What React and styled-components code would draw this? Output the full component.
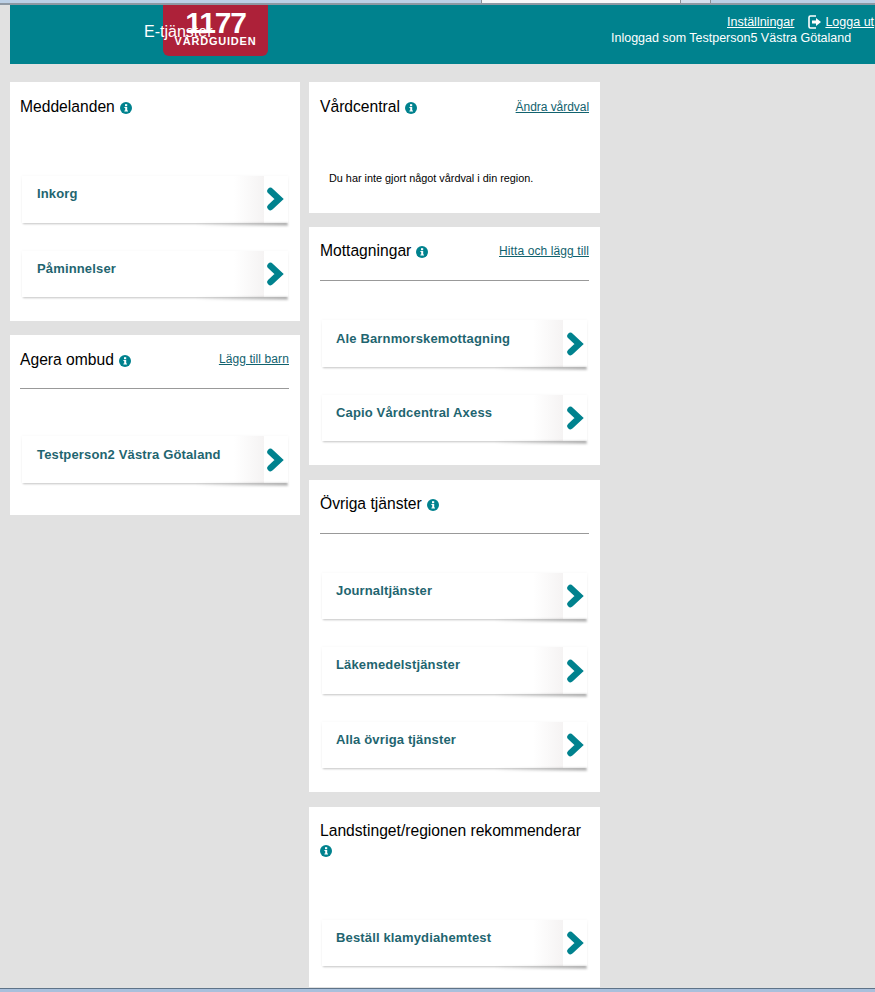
import React from 'react';
import styled, { createGlobalStyle } from 'styled-components';

const GlobalStyle = createGlobalStyle`
  html, body {
    margin: 0;
    padding: 0;
    background: #e1e1e1;
    font-family: "Liberation Sans", Arial, sans-serif;
  }
`;

const Page = styled.div`
  position: relative;
  width: 875px;
  height: 992px;
  overflow: hidden;
  background: #e1e1e1;
`;

const BrowserTop = styled.div`
  height: 3px;
  background: #bcd0e6;
  border-bottom: 2px solid #8d98a3;
`;

const BrowserTab = styled.div`
  position: absolute;
  top: 0;
  left: ${(p) => p.$left}px;
  width: ${(p) => p.$width}px;
  height: 3px;
  background: ${(p) => p.$color};
  border-left: 1px solid #8a8f96;
  border-right: 1px solid #8a8f96;
`;

const BrowserBottom = styled.div`
  position: absolute;
  left: 0;
  right: 0;
  bottom: 0;
  height: 3px;
  background: #a9c0dc;
  border-top: 1px solid #5e7388;
`;

const Header = styled.header`
  position: relative;
  display: flex;
  justify-content: flex-end;
  height: 59px;
  margin-left: 10px;
  background: #00828e;
  color: #fff;
`;

const Logo = styled.div`
  position: absolute;
  top: 0;
  left: 153px;
  width: 105px;
  height: 51px;
  display: flex;
  flex-direction: column;
  align-items: center;
  background: #ad2139;
  border-radius: 0 0 6px 6px;
`;

const LogoNumber = styled.span`
  margin-top: 5px;
  font-size: 30px;
  line-height: 25px;
  font-weight: 700;
  letter-spacing: -1.2px;
`;

const LogoName = styled.span`
  font-size: 11px;
  line-height: 13px;
  font-weight: 700;
  letter-spacing: 0.8px;
`;

const ServiceTitle = styled.span`
  position: absolute;
  top: 18px;
  left: 134px;
  font-size: 16px;
  line-height: 18px;
`;

const UserPanel = styled.div`
  display: flex;
  flex-direction: column;
  align-items: flex-start;
  width: 264px;
`;

const UserLinks = styled.div`
  display: flex;
  align-items: center;
  gap: 14px;
  height: 16px;
  margin: 9px 0 0 116px;
  white-space: nowrap;
`;

const HeaderLink = styled.a`
  color: #fff;
  font-size: 12.5px;
  text-decoration: underline;
`;

const LogoutLink = styled.span`
  display: flex;
  align-items: center;
  gap: 4px;
`;

const UserName = styled.div`
  margin-top: 1px;
  font-size: 12.5px;
  line-height: 15px;
  white-space: nowrap;
`;

const Columns = styled.main`
  display: grid;
  grid-template-columns: 290px 291px;
  column-gap: 9px;
  align-items: start;
  padding: 18px 0 0 10px;
`;

const Column = styled.div`
  display: flex;
  flex-direction: column;
  gap: ${(p) => p.$gap}px;
`;

const Card = styled.section`
  box-sizing: border-box;
  height: ${(p) => p.$height}px;
  padding: 0 11px 0 ${(p) => p.$left}px;
  background: #fff;
`;

const CardHead = styled.div`
  display: flex;
  justify-content: space-between;
  align-items: flex-start;
  box-sizing: border-box;
  height: ${(p) => p.$height || 54}px;
  padding-top: ${(p) => p.$top || 14}px;
  border-bottom: ${(p) => (p.$divider ? '1px solid #999' : 'none')};
`;

const CardTitle = styled.h2`
  margin: 0;
  font-size: 15.65px;
  line-height: 20px;
  font-weight: 400;
  color: #000;
`;

const InfoMark = styled.svg`
  display: inline-block;
  width: 12px;
  height: 12px;
  margin-left: 5px;
  vertical-align: -2px;
`;

const WrappedInfo = styled(InfoMark)`
  display: block;
  margin: 4px 0 0;
`;

const CardLink = styled.a`
  margin-top: ${(p) => p.$top || 2}px;
  font-size: 12px;
  line-height: 16px;
  letter-spacing: ${(p) => p.$spacing || 0.1}px;
  color: #11626e;
  text-decoration: underline;
  white-space: nowrap;
`;

const Notice = styled.p`
  margin: 35px 0 0 9px;
  font-size: 10.85px;
  line-height: 14px;
  color: #000;
`;

const LinkList = styled.div`
  display: flex;
  flex-direction: column;
  gap: 28px;
  padding: ${(p) => p.$top}px 0 0 2px;
`;

const ServiceLink = styled.a`
  position: relative;
  display: flex;
  justify-content: space-between;
  width: ${(p) => p.$width}px;
  height: 46.5px;
  background: #fff;
  box-shadow: 0 0 3px rgba(0, 0, 0, 0.04), 0 2px 2px -1px rgba(0, 0, 0, 0.22);

  &::after {
    content: '';
    position: absolute;
    top: 100%;
    right: 0;
    width: 35%;
    height: 3px;
    background: linear-gradient(to right, rgba(0, 0, 0, 0), rgba(0, 0, 0, 0.24));
    filter: blur(1px);
  }
`;

const ServiceLabel = styled.span`
  flex: 1;
  padding: 10.2px 0 0 ${(p) => p.$indent}px;
  font-size: 13px;
  line-height: 16px;
  font-weight: 700;
  letter-spacing: 0.15px;
  color: #1f6570;
  white-space: nowrap;
`;

const ArrowBox = styled.span`
  position: relative;
  display: flex;
  align-items: center;
  justify-content: center;
  box-sizing: border-box;
  width: 24px;
  padding-right: ${(p) => p.$pad}px;
  background: #fff;

  &::before {
    content: '';
    position: absolute;
    top: 0;
    bottom: 0;
    right: 100%;
    width: 30px;
    background: linear-gradient(to right, #fff, #f5f3f3);
  }
`;

const Info = ({ as: Mark = InfoMark }) => (
  <Mark viewBox="0 0 12 12">
    <circle cx="6" cy="6" r="6" fill="#00828e" />
    <rect x="5" y="2.2" width="2.2" height="2" fill="#fff" />
    <path d="M4.4 5h2.8v3.6h.8v1H4.4v-1h.8V6h-.8z" fill="#fff" />
  </Mark>
);

const Chevron = () => (
  <svg width="18" height="24" viewBox="0 0 18 24">
    <path
      d="M4.500 4l8.500 8-8.500 8"
      fill="none"
      stroke="#00828e"
      strokeWidth="6.500"
      strokeLinecap="round"
      strokeLinejoin="miter"
    />
  </svg>
);

const LogoutIcon = () => (
  <svg width="13" height="14" viewBox="0 0 13 14">
    <path d="M8 1H2.500A1.500 1.500 0 0 0 1 2.500v9A1.500 1.500 0 0 0 2.500 13H8" fill="none" stroke="#fff" strokeWidth="1.600" />
    <path d="M4 5.500h4V3l5 4-5 4V8.500H4z" fill="#fff" />
  </svg>
);

// the middle column's rows are a pixel narrower than the left column's
const Links = ({ items, top = 39, narrow }) => (
  <LinkList $top={top}>
    {items.map((item) => (
      <ServiceLink key={item} $width={narrow ? 265 : 266}>
        <ServiceLabel $indent={narrow ? 14 : 15}>{item}</ServiceLabel>
        <ArrowBox $pad={narrow ? 0 : 2}>
          <Chevron />
        </ArrowBox>
      </ServiceLink>
    ))}
  </LinkList>
);

export default function App() {
  return (
    <Page>
      <GlobalStyle />
      <BrowserTop />
      <BrowserTab $left={481} $width={198} $color="#f6f7f9" />
      <BrowserTab $left={680} $width={29} $color="#d5e0ee" />
      <Header>
        <Logo>
          <LogoNumber>1177</LogoNumber>
          <LogoName>VÅRDGUIDEN</LogoName>
        </Logo>
        <ServiceTitle>E-tjänster</ServiceTitle>
        <UserPanel>
          <UserLinks>
            <HeaderLink>Inställningar</HeaderLink>
            <LogoutLink>
              <LogoutIcon />
              <HeaderLink>Logga ut</HeaderLink>
            </LogoutLink>
          </UserLinks>
          <UserName>Inloggad som Testperson5 Västra Götaland</UserName>
        </UserPanel>
      </Header>
      <Columns>
        <Column $gap={14}>
          <Card $height={239} $left={10}>
            <CardHead $top={15}>
              <CardTitle>
                Meddelanden
                <Info />
              </CardTitle>
            </CardHead>
            <Links items={['Inkorg', 'Påminnelser']} top={40} />
          </Card>
          <Card $height={180} $left={10}>
            <CardHead $divider $top={15}>
              <CardTitle>
                Agera ombud
                <Info />
              </CardTitle>
              <CardLink $top={1}>Lägg till barn</CardLink>
            </CardHead>
            <Links items={['Testperson2 Västra Götaland']} top={47.4} />
          </Card>
        </Column>
        <Column $gap={14.4}>
          <Card $height={131} $left={11}>
            <CardHead $top={15}>
              <CardTitle>
                Vårdcentral
                <Info />
              </CardTitle>
              <CardLink $spacing={-0.05}>Ändra vårdval</CardLink>
            </CardHead>
            <Notice>Du har inte gjort något vårdval i din region.</Notice>
          </Card>
          <Card $height={238} $left={11}>
            <CardHead $divider>
              <CardTitle>
                Mottagningar
                <Info />
              </CardTitle>
              <CardLink>Hitta och lägg till</CardLink>
            </CardHead>
            <Links narrow items={['Ale Barnmorskemottagning', 'Capio Vårdcentral Axess']} />
          </Card>
          <Card $height={312.5} $left={11}>
            <CardHead $divider>
              <CardTitle>
                Övriga tjänster
                <Info />
              </CardTitle>
            </CardHead>
            <Links narrow items={['Journaltjänster', 'Läkemedelstjänster', 'Alla övriga tjänster']} />
          </Card>
          <Card $height={180} $left={11}>
            <CardHead $height={73}>
              <div>
                <CardTitle>Landstinget/regionen rekommenderar</CardTitle>
                <Info as={WrappedInfo} />
              </div>
            </CardHead>
            <Links narrow top={40} items={['Beställ klamydiahemtest']} />
          </Card>
        </Column>
      </Columns>
      <BrowserBottom />
    </Page>
  );
}
